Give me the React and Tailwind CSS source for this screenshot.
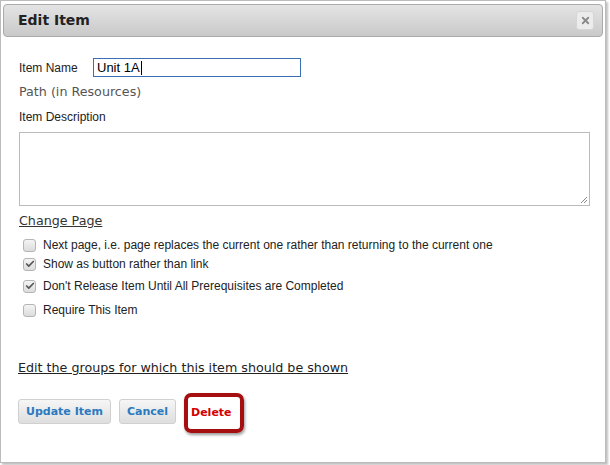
import { Check, X } from 'lucide-react'

const verdana = { fontFamily: '"DejaVu Sans", Verdana, sans-serif' }
const arial = { fontFamily: '"Liberation Sans", Arial, sans-serif' }

function Box({ checked }) {
  return (
    <span className="relative inline-flex h-[13px] w-[13px] shrink-0 items-center justify-center rounded-[3px] border border-[#b5b5b5] bg-gradient-to-b from-[#f4f4f4] to-[#dcdcdc]">
      {checked && <Check size={10} strokeWidth={4} className="text-[#555]" />}
    </span>
  )
}

const OPTIONS = [
  { label: 'Next page, i.e. page replaces the current one rather than returning to the current one', checked: false, mt: 'mt-[8px]' },
  { label: 'Show as button rather than link', checked: true, mt: 'mt-[3px]' },
  { label: "Don't Release Item Until All Prerequisites are Completed", checked: true, mt: 'mt-[6px]' },
  { label: 'Require This Item', checked: false, mt: 'mt-[8px]' },
]

export default function App() {
  return (
    <div className="h-[465px] w-[610px] bg-white">
      <div className="h-[463px] w-[606px] border border-[#bcbcbc] bg-white shadow-[2px_2px_2px_rgba(0,0,0,0.25)]">
        <div className="mx-[2px] mt-[3px] flex h-[33px] items-center justify-between rounded-[4px] border border-[#aaa] bg-gradient-to-b from-[#e4e4e4] to-[#c9c9c9] pl-[14px] pr-[8px]">
          <span className="text-[14px] font-bold text-[#222]" style={verdana}>Edit Item</span>
          <span className="flex h-[19px] w-[18px] items-center justify-center rounded-[3px] border border-[#d5d5d5] bg-[#ececec]">
            <X size={11} strokeWidth={4} className="text-[#8a8a8a]" />
          </span>
        </div>

        <div className="px-[17px]">
          <div className="mt-[21px] flex h-[19px] items-center text-[12px] leading-none text-[#222]" style={arial}>
            <span className="w-[75px] pl-px">Item Name</span>
            <div className="flex h-[19px] w-[208px] items-center border border-[#3a6fb3] px-[3px] text-[13px] text-black">
              Unit 1A<span className="ml-[1px] h-[14px] w-px bg-black" />
            </div>
          </div>
          <div className="mt-[7px] flex h-[16px] items-center pl-px text-[12.7px] leading-none text-[#555]" style={verdana}>Path (in Resources)</div>
          <div className="mt-[9px] flex h-[16px] items-center pl-px text-[12px] leading-none text-[#222]" style={arial}>Item Description</div>
          <div className="relative mt-[7px] ml-px h-[74px] w-[571px] border border-[#bbb]">
            <svg className="absolute right-[1px] bottom-[1px]" width="8" height="8" viewBox="0 0 8 8">
              <path d="M7 1L1 7M7 4L4 7" stroke="#888" strokeWidth="1" />
            </svg>
          </div>
          <div className="mt-[7px] flex h-[16px] items-center pl-px text-[12.7px] leading-none text-[#333]">
            <span className="underline" style={verdana}>Change Page</span>
          </div>

          {OPTIONS.map((o) => (
            <div key={o.label} className={`${o.mt} ml-[5px] flex h-[16px] items-center gap-[7px] text-[12px] leading-none text-[#222]`} style={arial}>
              <Box checked={o.checked} />
              <span>{o.label}</span>
            </div>
          ))}

          <div className="mt-[42px] flex h-[16px] items-center text-[12.7px] leading-none text-[#222]">
            <span className="underline" style={verdana}>Edit the groups for which this item should be shown</span>
          </div>

          <div className="mt-[17px] flex h-[40px] items-center gap-[8px] text-[11px] font-bold leading-none" style={verdana}>
            <button className="mb-[3px] h-[25px] rounded-[3px] border border-[#d0d0d0] bg-gradient-to-b from-[#f6f6f6] to-[#dedede] px-[7px] text-[#2a7ac0]">Update Item</button>
            <button className="mb-[3px] h-[25px] rounded-[3px] border border-[#d0d0d0] bg-gradient-to-b from-[#f6f6f6] to-[#dedede] px-[7px] text-[#2a7ac0]">Cancel</button>
            <span className="flex h-[40px] w-[60px] items-center rounded-[7px] border-[4px] border-[#a50f0f] pb-[2px] pl-[3px] text-[#d40000] shadow-[1px_2px_3px_rgba(0,0,0,0.4)]">Delete</span>
          </div>
        </div>
      </div>
    </div>
  )
}
